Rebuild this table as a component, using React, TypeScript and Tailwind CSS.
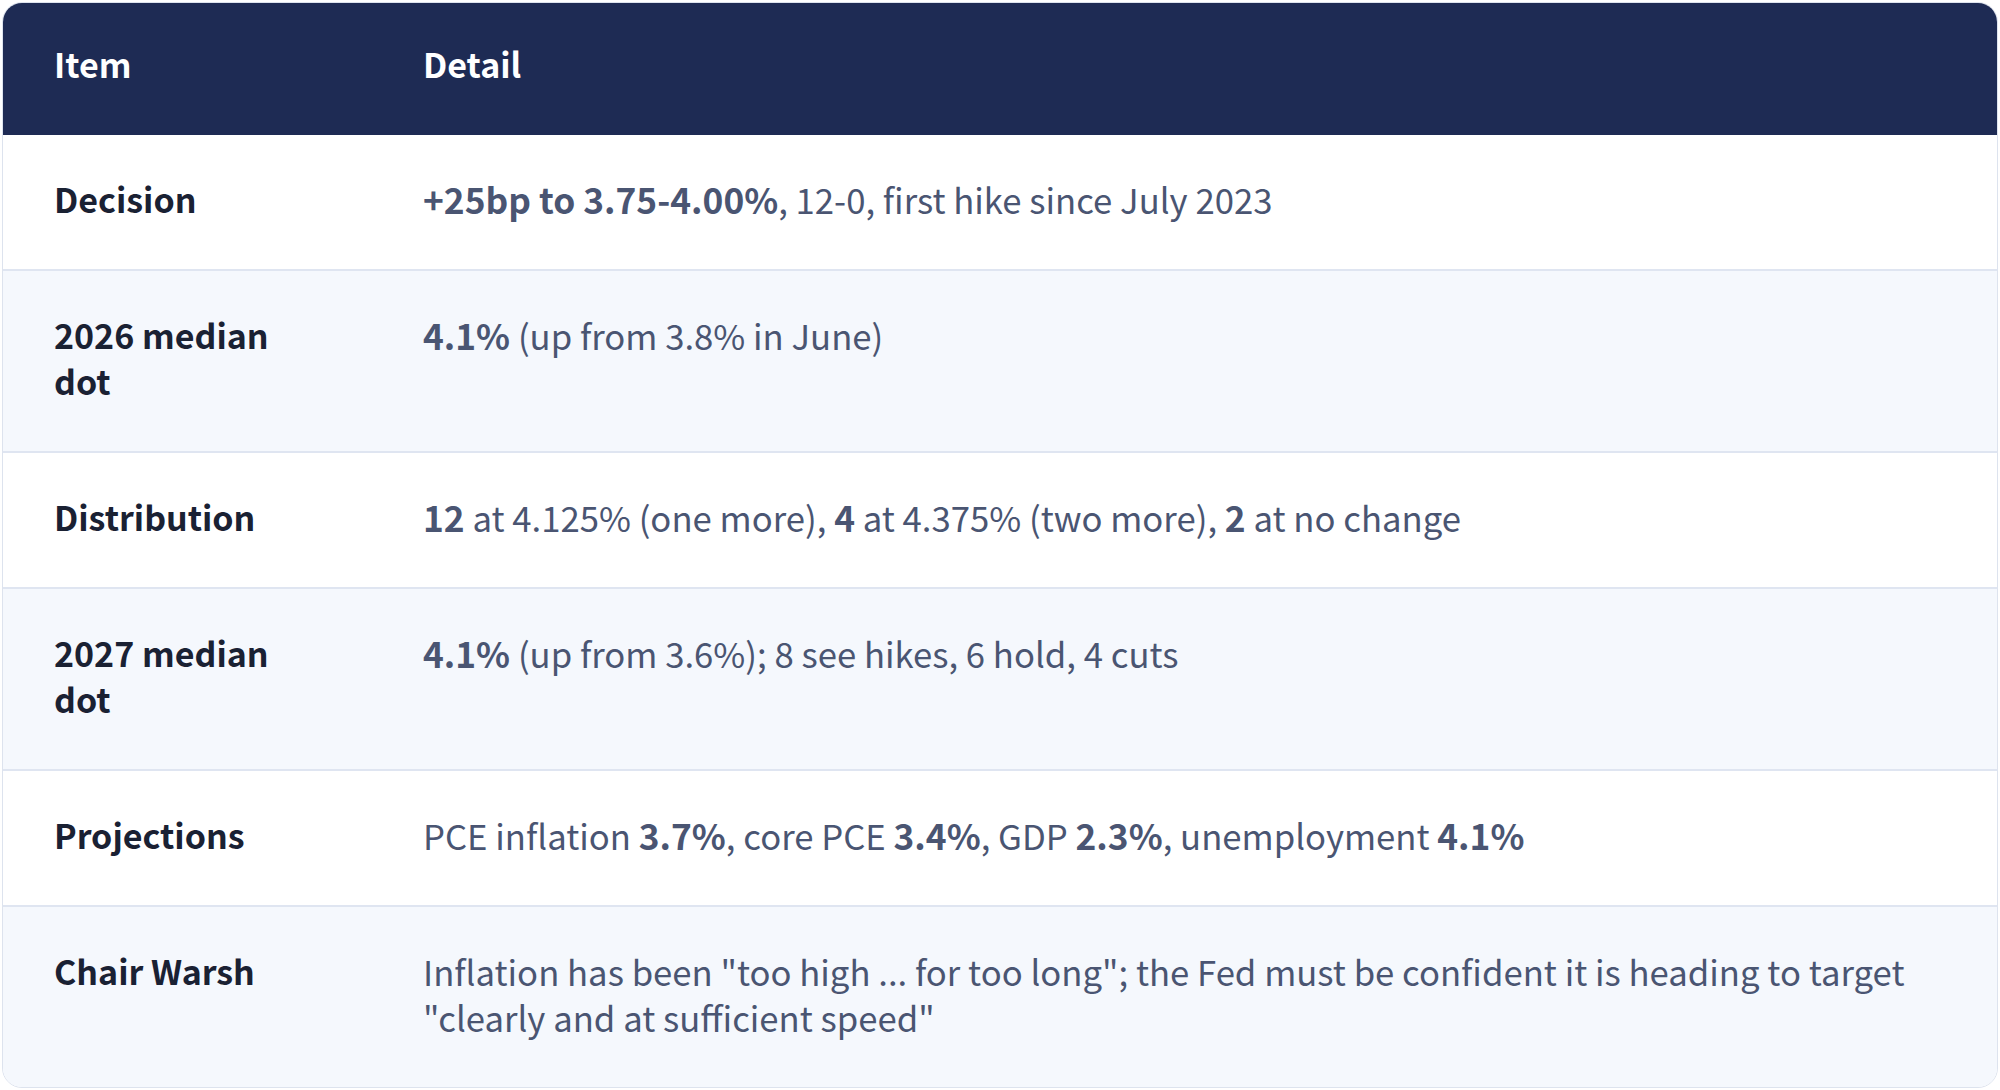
import React from "react";

type Row = { item: string; detail: React.ReactNode };

const B = ({ children }: { children: React.ReactNode }) => (
  <span className="font-bold text-[35.3px]">{children}</span>
);

const rows: Row[] = [
  {
    item: "Decision",
    detail: (
      <>
        <B>+25bp to 3.75-4.00%</B>, 12-0, first hike since July 2023
      </>
    ),
  },
  {
    item: "2026 median dot",
    detail: (
      <>
        <B>4.1%</B> (up from 3.8% in June)
      </>
    ),
  },
  {
    item: "Distribution",
    detail: (
      <>
        <B>12</B> at 4.125% (one more), <B>4</B> at 4.375% (two more), <B>2</B> at no change
      </>
    ),
  },
  {
    item: "2027 median dot",
    detail: (
      <>
        <B>4.1%</B> (up from 3.6%); 8 see hikes, 6 hold, 4 cuts
      </>
    ),
  },
  {
    item: "Projections",
    detail: (
      <>
        PCE inflation <B>3.7%</B>, core PCE <B>3.4%</B>, GDP <B>2.3%</B>, unemployment <B>4.1%</B>
      </>
    ),
  },
  {
    item: "Chair Warsh",
    detail: (
      <>
        Inflation has been "too high ... for too long"; the Fed must be confident it is heading to target "clearly and at sufficient speed"
      </>
    ),
  },
];

export default function App() {
  return (
    <div
      className="w-[2000px] min-h-[1090px] bg-white p-[2px]"
      style={{ fontFamily: '"Noto Sans CJK KR", "Noto Sans", sans-serif' }}
    >
      <div className="rounded-[20px] border border-[#dde3ee] overflow-hidden">
        <div className="grid grid-cols-[369px_1fr] bg-[#1e2b54] text-white font-bold text-[34px] leading-[46px]">
          <div className="pl-[51px] pr-[51px] pt-[38px] pb-[48px]">Item</div>
          <div className="pl-[51px] pr-[51px] pt-[38px] pb-[48px]">Detail</div>
        </div>
        {rows.map((r, i) => (
          <div
            key={i}
            className={
              "grid grid-cols-[369px_1fr] leading-[46px] " +
              (i % 2 === 1 ? "bg-[#f5f8fd] " : "bg-white ") +
              (i > 0 ? "border-t-2 border-[#dfe5f1]" : "")
            }
          >
            <div className="pl-[51px] pr-[51px] pt-[41px] pb-[47px] text-[34px] font-bold text-[#1a2133]">
              {r.item}
            </div>
            <div className="pl-[51px] pr-[51px] pt-[41px] pb-[47px] text-[34.7px] text-[#4a5572]">
              {r.detail}
            </div>
          </div>
        ))}
      </div>
    </div>
  );
}
